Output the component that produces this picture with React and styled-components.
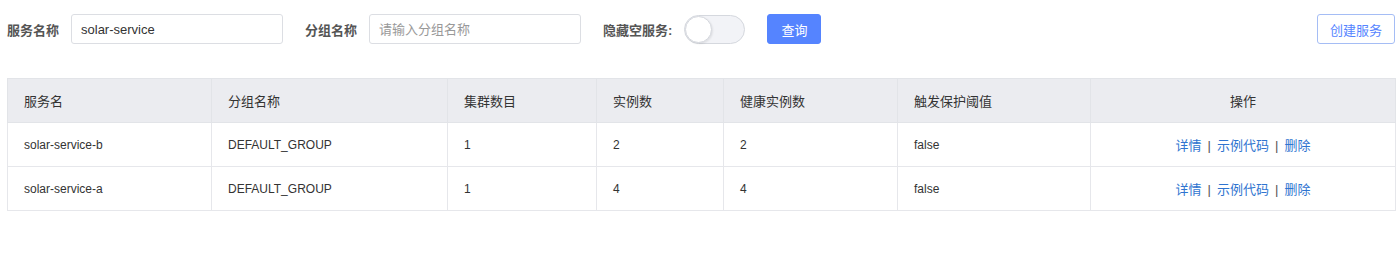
import React, { useState } from 'react'
import styled, { createGlobalStyle } from 'styled-components'

const GlobalStyle = createGlobalStyle`
    body {
        margin: 0;
        background: #fff;
        font-family: "Liberation Sans", "Noto Sans CJK SC", sans-serif;
        font-size: 12px;
        color: #333;
    }
`

const Page = styled.div`
    padding: 14px 5px 0 7px;
`

const Toolbar = styled.div`
    display: flex;
    align-items: center;
    height: 30px;
`

const Label = styled.span`
    font-size: 13px;
    font-weight: bold;
    color: #555;
    margin-right: ${props => props.gap || 12}px;
`

const Input = styled.input`
    box-sizing: border-box;
    width: 212px;
    height: 30px;
    padding: 0 9px;
    border: 1px solid #dcdee3;
    border-radius: 3px;
    font-family: inherit;
    font-size: 13px;
    color: #333;
    outline: none;
    margin-right: 22px;

    &::placeholder {
        color: #999;
    }
`

const Track = styled.button`
    position: relative;
    box-sizing: border-box;
    width: 61px;
    height: 29px;
    padding: 0;
    border: 1px solid #d5d8de;
    border-radius: 15px;
    background: ${props => props.on ? '#5584ff' : '#f2f3f7'};
    cursor: pointer;
    margin-right: 22px;
`

const Knob = styled.span`
    position: absolute;
    top: 0;
    left: ${props => props.on ? '32px' : '0'};
    box-sizing: border-box;
    width: 27px;
    height: 27px;
    border-radius: 50%;
    background: #fff;
    border: 1px solid #d5d8de;
    box-shadow: 1px 1px 2px rgba(0, 0, 0, 0.08);
`

const Button = styled.button`
    box-sizing: border-box;
    height: 30px;
    padding: 0 ${props => props.pad}px;
    border-radius: 3px;
    font-family: inherit;
    font-size: 13px;
    cursor: pointer;
    border: 1px solid ${props => props.primary ? '#5584ff' : '#a5bdf5'};
    background: ${props => props.primary ? '#5584ff' : '#fff'};
    color: ${props => props.primary ? '#fff' : '#5584ff'};
    margin-left: ${props => props.push ? 'auto' : '0'};
`

const Table = styled.table`
    width: 1388px;
    margin-top: 34px;
    border-collapse: collapse;
    table-layout: fixed;
    border: 1px solid #e2e4e8;
`

const Th = styled.th`
    height: 43px;
    padding: 0 16px;
    background: #ebecf0;
    border: 1px solid #e2e4e8;
    font-size: 13px;
    font-weight: normal;
    color: #333;
    text-align: ${props => props.center ? 'center' : 'left'};
`

const Td = styled.td`
    height: 43px;
    padding: 0 16px;
    border: 1px solid #e6e7eb;
    color: #333;
    text-align: ${props => props.center ? 'center' : 'left'};
`

const Actions = styled.div`
    font-size: 13px;
`

const Link = styled.a`
    color: #2f74d0;
    cursor: pointer;
`

const Sep = styled.span`
    color: #555;
    margin: 0 6px;
`

const columns = [
    { title: '服务名', width: 204 },
    { title: '分组名称', width: 236 },
    { title: '集群数目', width: 149 },
    { title: '实例数', width: 127 },
    { title: '健康实例数', width: 174 },
    { title: '触发保护阈值', width: 193 },
    { title: '操作', width: 305, center: true },
]

const services = [
    { name: 'solar-service-b', group: 'DEFAULT_GROUP', clusters: 1, instances: 2, healthy: 2, threshold: 'false' },
    { name: 'solar-service-a', group: 'DEFAULT_GROUP', clusters: 1, instances: 4, healthy: 4, threshold: 'false' },
]

const App = () => {
    const [hideEmpty, setHideEmpty] = useState(false)

    return (
        <Page>
            <GlobalStyle />
            <Toolbar>
                <Label>服务名称</Label>
                <Input defaultValue='solar-service' />
                <Label gap={12}>分组名称</Label>
                <Input placeholder='请输入分组名称' />
                <Label gap={12}>隐藏空服务:</Label>
                <Track on={hideEmpty ? 1 : 0} onClick={() => setHideEmpty(!hideEmpty)}>
                    <Knob on={hideEmpty ? 1 : 0} />
                </Track>
                <Button primary pad={13}>查询</Button>
                <Button push pad={12}>创建服务</Button>
            </Toolbar>
            <Table>
                <colgroup>
                    {columns.map(col => <col key={col.title} style={{ width: col.width }} />)}
                </colgroup>
                <thead>
                    <tr>
                        {columns.map(col => <Th key={col.title} center={col.center}>{col.title}</Th>)}
                    </tr>
                </thead>
                <tbody>
                    {services.map(s => (
                        <tr key={s.name}>
                            <Td>{s.name}</Td>
                            <Td>{s.group}</Td>
                            <Td>{s.clusters}</Td>
                            <Td>{s.instances}</Td>
                            <Td>{s.healthy}</Td>
                            <Td>{s.threshold}</Td>
                            <Td center>
                                <Actions>
                                    <Link>详情</Link>
                                    <Sep>|</Sep>
                                    <Link>示例代码</Link>
                                    <Sep>|</Sep>
                                    <Link>删除</Link>
                                </Actions>
                            </Td>
                        </tr>
                    ))}
                </tbody>
            </Table>
        </Page>
    )
}

export default App
